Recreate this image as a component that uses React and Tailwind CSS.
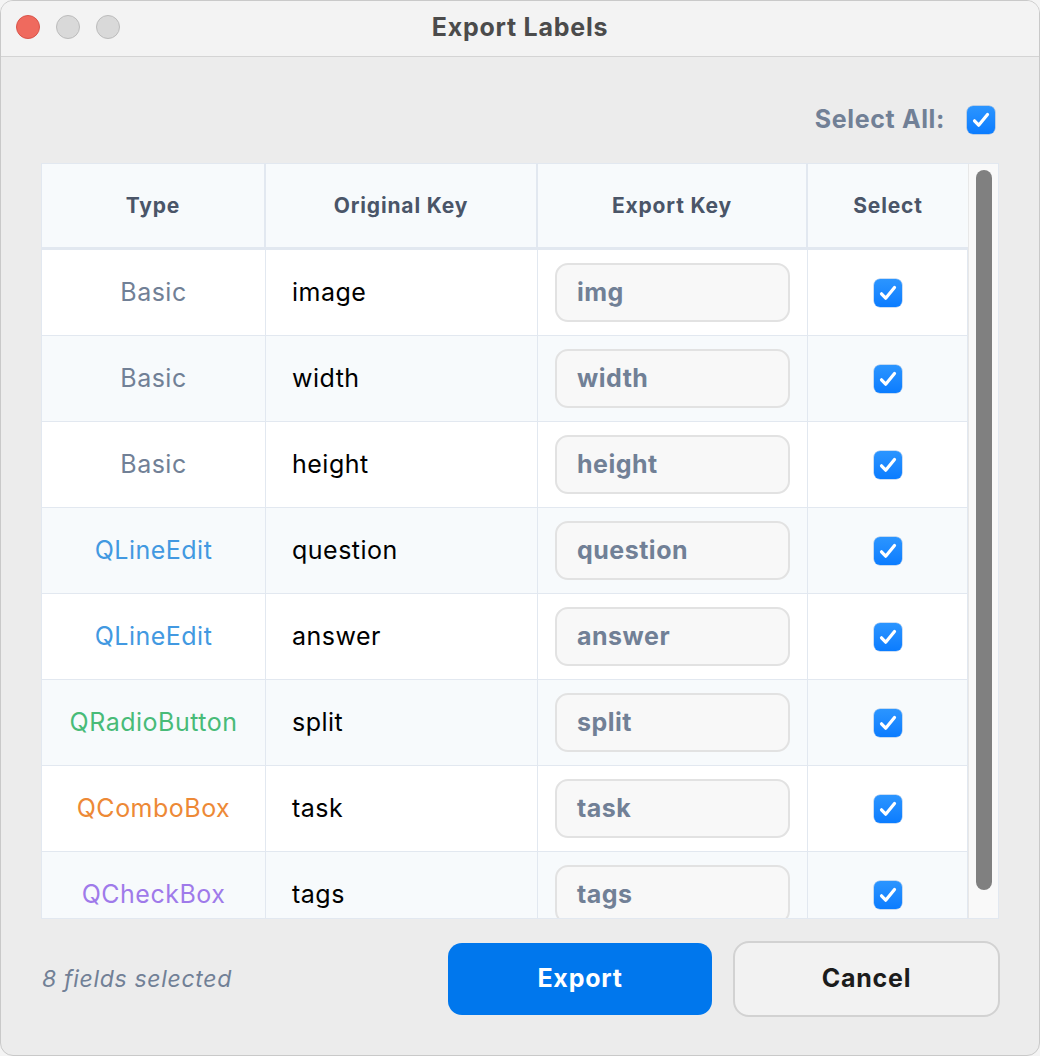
import React from 'react';

const rows = [
  { type: 'Basic', color: 'text-[#718096]', key: 'image', exp: 'img' },
  { type: 'Basic', color: 'text-[#718096]', key: 'width', exp: 'width' },
  { type: 'Basic', color: 'text-[#718096]', key: 'height', exp: 'height' },
  { type: 'QLineEdit', color: 'text-[#4299e1]', key: 'question', exp: 'question' },
  { type: 'QLineEdit', color: 'text-[#4299e1]', key: 'answer', exp: 'answer' },
  { type: 'QRadioButton', color: 'text-[#48bb78]', key: 'split', exp: 'split' },
  { type: 'QComboBox', color: 'text-[#ed8936]', key: 'task', exp: 'task' },
  { type: 'QCheckBox', color: 'text-[#9f7aea]', key: 'tags', exp: 'tags' },
];

const Check = () => (
  <div className="w-[28px] h-[28px] rounded-[6px] bg-gradient-to-b from-[#2b95ff] to-[#0a7cff] flex items-center justify-center shadow-[0_0_0_0.5px_rgba(0,90,200,0.4)]">
    <svg width="24" height="24" viewBox="0 0 24 24" fill="none">
      <path d="M5.5 12.8l4.2 4.4L18.5 6.5" stroke="white" strokeWidth="3.2" strokeLinecap="round" strokeLinejoin="round" />
    </svg>
  </div>
);

export default function App() {
  return (
    <div className="w-[1040px] h-[1056px] bg-[#f4f4f4] font-['Inter',sans-serif]">
      <div className="w-full h-full rounded-[13px] overflow-hidden bg-[#ececec] flex flex-col border border-[#c9c9c9]">
        {/* Title bar */}
        <div className="h-[56px] shrink-0 bg-[#f3f3f3] border-b border-[#d4d4d4] relative flex items-center justify-center">
          <div className="absolute left-[15px] top-[14px] flex gap-[16px]">
            <div className="w-[24px] h-[24px] rounded-full bg-[#ef6a5e] border border-[#d9544a]" />
            <div className="w-[24px] h-[24px] rounded-full bg-[#d9d9d9] border border-[#bcbcbc]" />
            <div className="w-[24px] h-[24px] rounded-full bg-[#d9d9d9] border border-[#bcbcbc]" />
          </div>
          <div className="text-[25px] tracking-[0.03em] font-bold text-[#4b4b4b] -mt-[1px]">Export Labels</div>
        </div>

        <div className="flex-1 px-[40px] flex flex-col">
          {/* Select all */}
          <div className="h-[106px] flex items-center justify-end gap-[22px] pr-[4px] pt-[20px]">
            <span className="text-[25px] tracking-[0.025em] font-bold text-[#718096]">Select All:</span>
            <Check />
          </div>

          {/* Table */}
          <div className="h-[756px] bg-white border border-[#e2e8f0] flex overflow-hidden">
            <div className="w-[926px] flex flex-col">
              <div className="h-[86px] shrink-0 bg-[#f7fafc] border-b-[3px] border-[#e2e8f0] flex text-[21px] tracking-[0.04em] font-bold text-[#4a5568]">
                <div className="w-[224px] border-r-2 border-[#e2e8f0] flex items-center justify-center">Type</div>
                <div className="w-[272px] border-r-2 border-[#e2e8f0] flex items-center justify-center">Original Key</div>
                <div className="w-[270px] border-r-2 border-[#e2e8f0] flex items-center justify-center">Export Key</div>
                <div className="flex-1 flex items-center justify-center">Select</div>
              </div>
              <div className="flex-1 overflow-hidden">
                {rows.map((r, i) => (
                  <div key={i} className={`h-[86px] flex border-b border-[#e2e8f0] text-[25px] tracking-[0.02em] ${i % 2 === 1 ? 'bg-[#f7fafc]' : 'bg-white'}`}>
                    <div className={`w-[224px] border-r border-[#e2e8f0] flex items-center justify-center ${r.color}`}>{r.type}</div>
                    <div className="w-[272px] border-r border-[#e2e8f0] flex items-center pl-[26px] text-black">{r.key}</div>
                    <div className="w-[270px] border-r border-[#e2e8f0] flex items-center pl-[17px] pr-[17px]">
                      <div className="w-[235px] h-[59px] rounded-[13px] border-2 border-[#e2e2e2] bg-[#f8f8f8] flex items-center pl-[20px] font-bold text-[#718096]">{r.exp}</div>
                    </div>
                    <div className="flex-1 flex items-center justify-center border-r border-[#e2e8f0]">
                      <Check />
                    </div>
                  </div>
                ))}
              </div>
            </div>
            <div className="flex-1 bg-[#f9f9f9] border-l border-[#e8e8e8] flex justify-center pt-[6px]">
              <div className="w-[16px] h-[720px] rounded-full bg-[#808080]" />
            </div>
          </div>

          {/* Footer */}
          <div className="flex-1 flex items-center justify-between pb-[16px]">
            <span className="pl-[1px] text-[23px] tracking-[0.03em] italic text-[#718096]">8 fields selected</span>
            <div className="flex items-center gap-[21px] -mr-[1px]">
              <button className="w-[264px] h-[72px] rounded-[14px] bg-[#0077ed] text-white text-[25px] tracking-[0.03em] font-bold">Export</button>
              <button className="w-[267px] h-[76px] rounded-[16px] bg-[#f2f2f2] border-2 border-[#d2d2d2] text-[#1c1c1c] text-[25px] tracking-[0.03em] font-bold">Cancel</button>
            </div>
          </div>
        </div>
      </div>
    </div>
  );
}
